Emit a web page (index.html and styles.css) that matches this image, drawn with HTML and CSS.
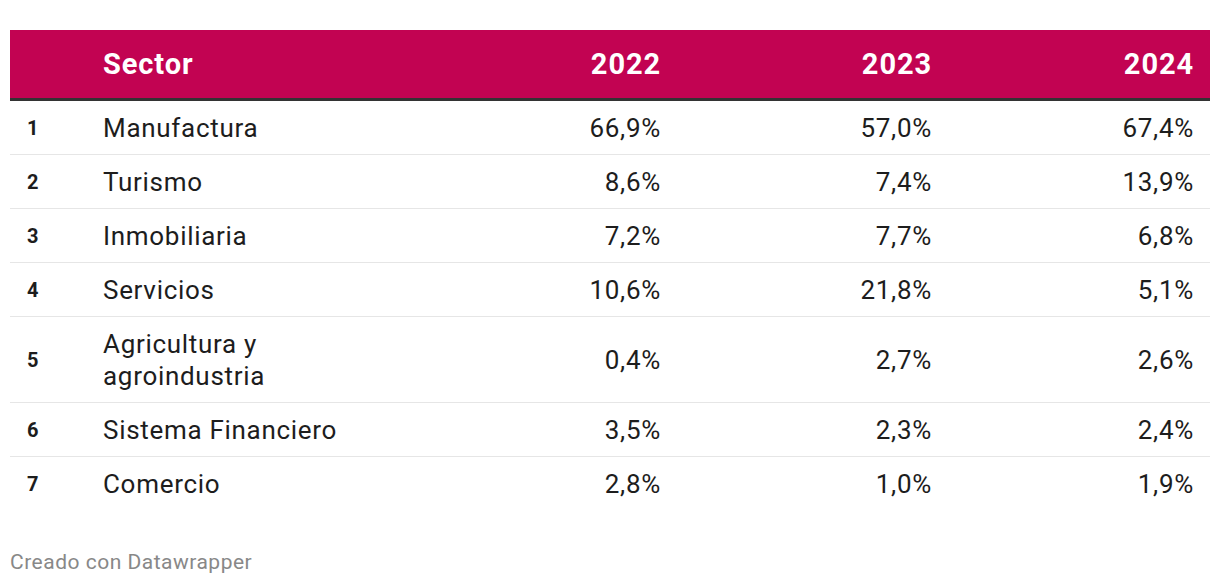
FILE: index.html
```html
<!DOCTYPE html>
<html lang="es">
<head>
<meta charset="utf-8">
<link rel="stylesheet" href="styles.css">
</head>
<body>
<div class="chart">
  <table class="dw-table">
    <colgroup>
      <col class="c-rank"><col class="c-sector"><col class="c-y1"><col class="c-y2"><col class="c-y3">
    </colgroup>
    <thead>
      <tr>
        <th class="rank"></th>
        <th class="sector">Sector</th>
        <th class="num">2022</th>
        <th class="num">2023</th>
        <th class="num">2024</th>
      </tr>
    </thead>
    <tbody>
      <tr><td class="rank">1</td><td class="sector">Manufactura</td><td class="num">66,9%</td><td class="num">57,0%</td><td class="num">67,4%</td></tr>
      <tr><td class="rank">2</td><td class="sector">Turismo</td><td class="num">8,6%</td><td class="num">7,4%</td><td class="num">13,9%</td></tr>
      <tr><td class="rank">3</td><td class="sector">Inmobiliaria</td><td class="num">7,2%</td><td class="num">7,7%</td><td class="num">6,8%</td></tr>
      <tr><td class="rank">4</td><td class="sector">Servicios</td><td class="num">10,6%</td><td class="num">21,8%</td><td class="num">5,1%</td></tr>
      <tr><td class="rank">5</td><td class="sector">Agricultura y agroindustria</td><td class="num">0,4%</td><td class="num">2,7%</td><td class="num">2,6%</td></tr>
      <tr><td class="rank">6</td><td class="sector">Sistema Financiero</td><td class="num">3,5%</td><td class="num">2,3%</td><td class="num">2,4%</td></tr>
      <tr><td class="rank">7</td><td class="sector">Comercio</td><td class="num">2,8%</td><td class="num">1,0%</td><td class="num">1,9%</td></tr>
    </tbody>
  </table>
  <div class="footer">Creado con Datawrapper</div>
</div>
</body>
</html>
```
FILE: styles.css
```css
html, body {
  margin: 0;
  padding: 0;
  background: #ffffff;
}
body {
  font-family: Roboto, "Liberation Sans", Arial, sans-serif;
  color: #1d1d1d;
}
.chart {
  padding: 30px 10px 0 10px;
}
.dw-table {
  width: 1200px;
  border-collapse: separate;
  border-spacing: 0;
  table-layout: fixed;
}
.c-rank { width: 77px; }
.c-sector { width: 328px; }
.c-y1 { width: 262px; }
.c-y2 { width: 271px; }
.c-y3 { width: 262px; }
.dw-table th {
  background: #c20352;
  color: #ffffff;
  font-weight: 700;
  font-size: 29px;
  line-height: 34px;
  letter-spacing: 0.9px;
  padding: 17px 16px 17px 16px;
  border-bottom: 3px solid #333333;
  vertical-align: middle;
}
.dw-table td {
  font-size: 26px;
  line-height: 32px;
  letter-spacing: 0.7px;
  padding: 11px 16px 10px 16px;
  border-bottom: 1px solid #e6e6e6;
  vertical-align: middle;
}
.dw-table tbody tr:last-child td {
  border-bottom: none;
}
.num { text-align: right; }
.sector { text-align: left; }
td.rank {
  font-size: 20px;
  font-weight: 700;
  letter-spacing: 0;
  padding-left: 17px;
}
.footer {
  margin-top: 38px;
  font-size: 21px;
  line-height: 28px;
  letter-spacing: 0.5px;
  color: #888888;
}
```
